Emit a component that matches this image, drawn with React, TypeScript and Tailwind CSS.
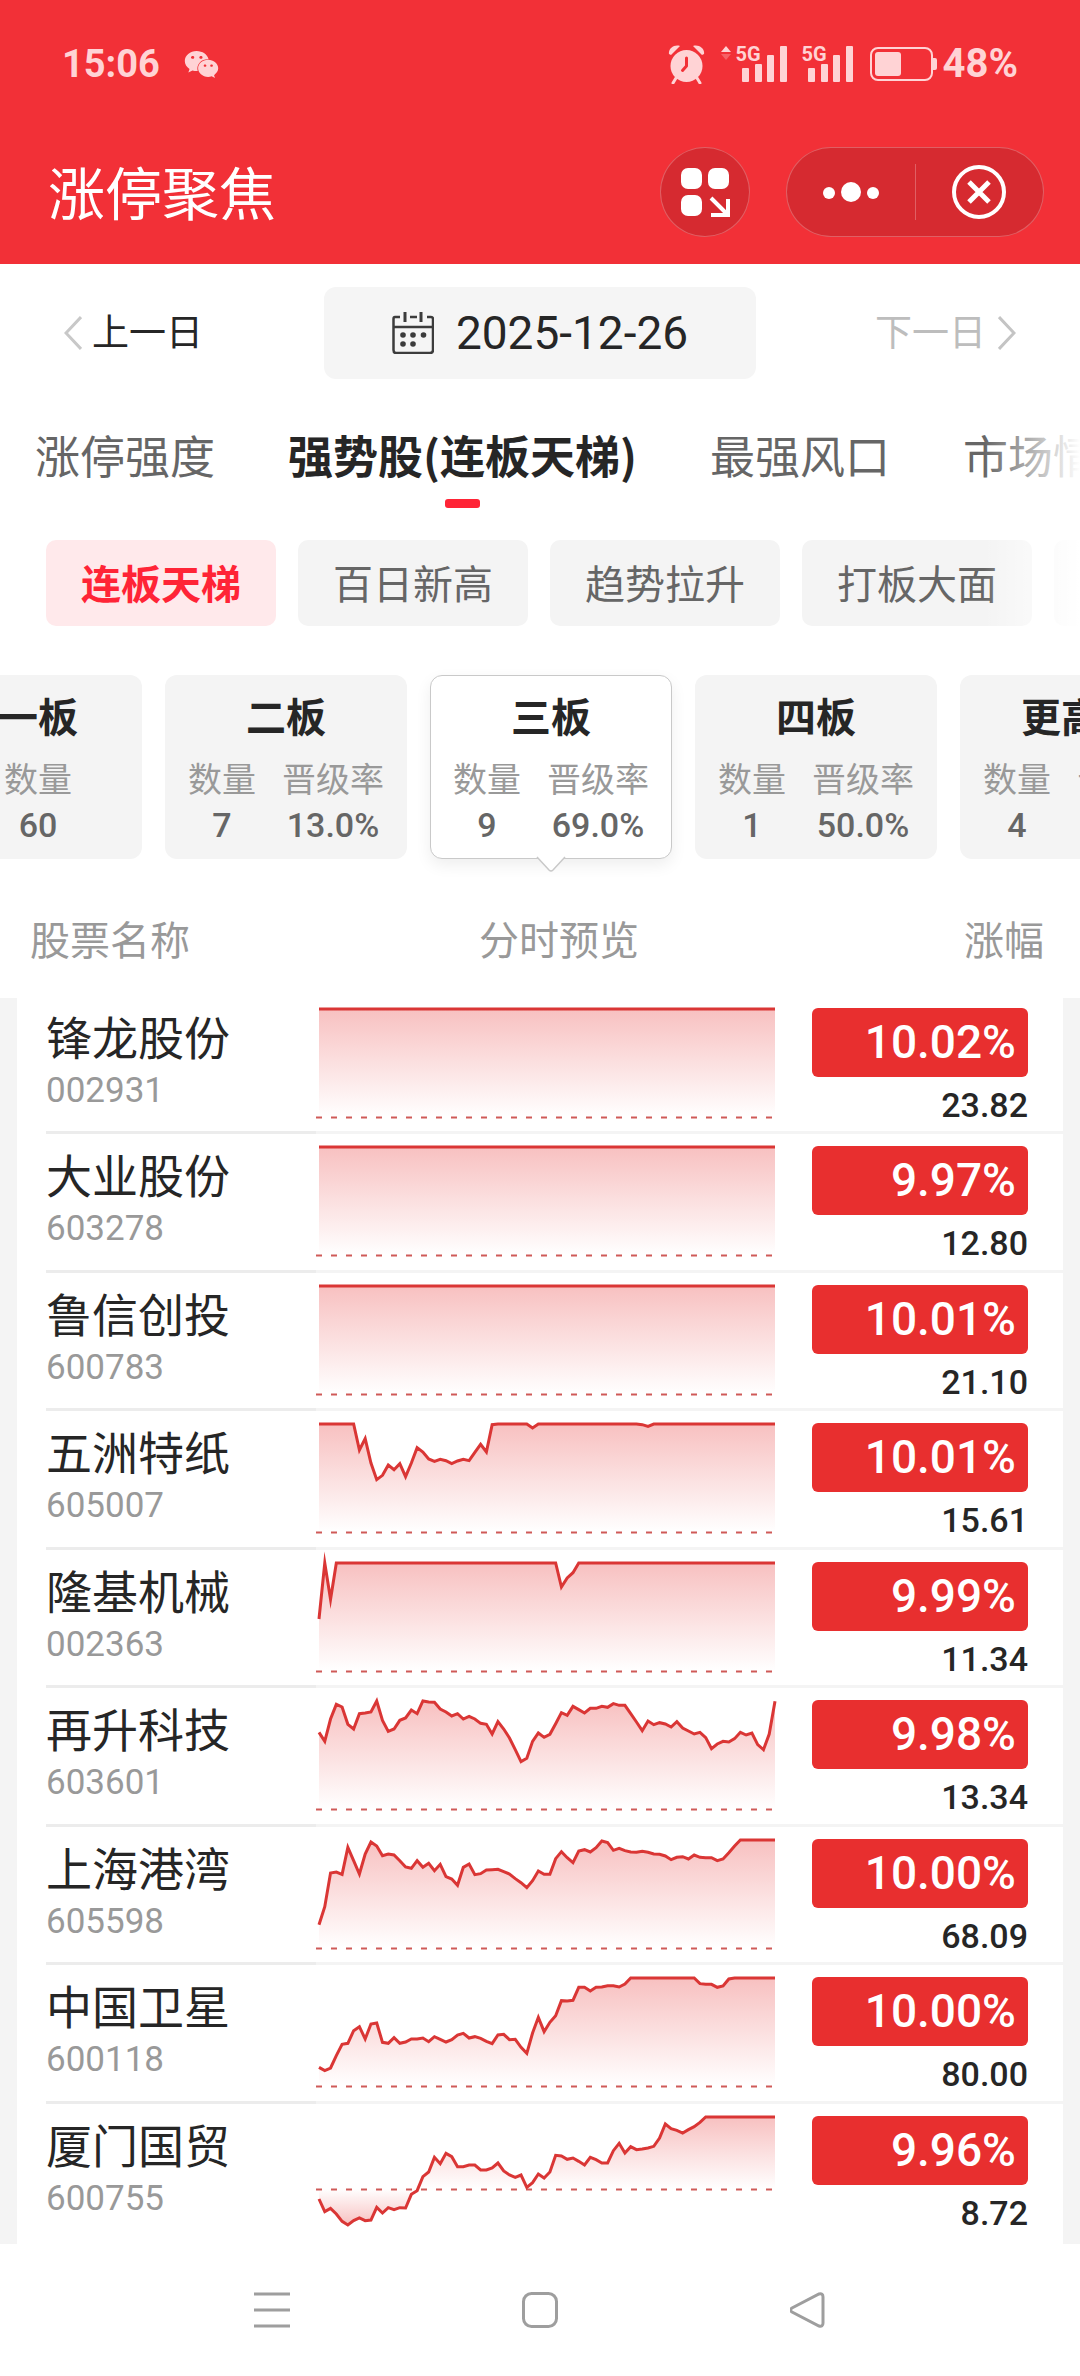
import React from "react";
import { FaWeixin } from "react-icons/fa";

type Stock = {
  name: string;
  code: string;
  change: string;
  price: string;
  base: number;
  depth: number[];
};

const POINTS = 80;
const LIMIT_BASE = 324;

const flat = (count: number): number[] => Array.from({ length: count }, () => 0);

// Each series is the distance below the limit-up price, sampled at equal intervals;
// `base` is the distance of the previous close on the same scale.
const stocks: Stock[] = [
  { name: "锋龙股份", code: "002931", change: "10.02%", price: "23.82", base: LIMIT_BASE, depth: flat(POINTS) },
  { name: "大业股份", code: "603278", change: "9.97%", price: "12.80", base: LIMIT_BASE, depth: flat(POINTS) },
  { name: "鲁信创投", code: "600783", change: "10.01%", price: "21.10", base: LIMIT_BASE, depth: flat(POINTS) },
  {
    name: "五洲特纸",
    code: "605007",
    change: "10.01%",
    price: "15.61",
    base: LIMIT_BASE,
    depth: [
      ...flat(7), 78, 44, 117, 167, 154, 123, 137, 119, 158, 117, 71, 84, 105, 112, 106, 110, 119, 111, 106, 110,
      85, 61, 84, 2, ...flat(6), 12, ...flat(18), 2, 7, ...flat(22),
    ],
  },
  {
    name: "隆基机械",
    code: "002363",
    change: "9.99%",
    price: "11.34",
    base: LIMIT_BASE,
    depth: [168, 0, 109, ...flat(39), 72, 45, 29, ...flat(35)],
  },
  {
    name: "再升科技",
    code: "603601",
    change: "9.98%",
    price: "13.34",
    base: LIMIT_BASE,
    depth: [
      94, 121, 54, 10, 18, 70, 84, 38, 36, 33, 0, 58, 91, 84, 58, 51, 27, 38, 0, 3, 4, 24, 33, 45, 38, 54, 46, 54,
      67, 70, 99, 62, 84, 111, 146, 182, 172, 121, 96, 109, 100, 68, 35, 43, 16, 26, 36, 22, 22, 16, 19, 8, 13, 13,
      38, 63, 89, 60, 71, 65, 69, 78, 62, 81, 90, 99, 94, 110, 143, 129, 121, 123, 113, 94, 102, 96, 131, 146, 99, 1,
    ],
  },
  {
    name: "上海港湾",
    code: "605598",
    change: "10.00%",
    price: "68.09",
    base: LIMIT_BASE,
    depth: [
      254, 200, 99, 96, 103, 22, 62, 102, 42, 6, 18, 47, 42, 45, 62, 81, 85, 62, 82, 70, 92, 73, 110, 117, 136, 82,
      72, 104, 101, 90, 89, 88, 95, 102, 116, 128, 143, 122, 93, 103, 103, 56, 35, 53, 68, 33, 29, 36, 23, 3, 8, 31,
      25, 32, 36, 37, 34, 37, 42, 43, 48, 59, 52, 50, 57, 45, 52, 53, 53, 62, 57, 38, 18, ...flat(7),
    ],
  },
  {
    name: "中国卫星",
    code: "600118",
    change: "10.00%",
    price: "80.00",
    base: LIMIT_BASE,
    depth: [
      268, 278, 270, 233, 199, 196, 158, 146, 183, 138, 135, 193, 196, 179, 196, 192, 183, 183, 180, 191, 176, 184,
      192, 185, 171, 166, 180, 176, 181, 190, 197, 171, 169, 185, 184, 208, 226, 165, 118, 161, 133, 113, 68, 69, 67,
      28, 28, 39, 28, 27, 23, 23, 27, 18, ...flat(12), 17, 19, 19, 28, 24, 3, ...flat(8),
    ],
  },
  {
    name: "厦门国贸",
    code: "600755",
    change: "9.96%",
    price: "8.72",
    base: 216,
    depth: [
      246, 284, 274, 291, 313, 324, 311, 303, 311, 309, 271, 288, 272, 278, 272, 273, 232, 221, 179, 165, 121, 140,
      109, 119, 149, 149, 144, 144, 159, 159, 153, 138, 162, 174, 181, 174, 211, 197, 171, 183, 165, 115, 117, 127,
      123, 133, 144, 121, 128, 138, 138, 101, 79, 108, 89, 98, 96, 93, 88, 63, 21, 35, 40, 48, 38, 29, 16, ...flat(13),
    ],
  },
];

const tabs = ["涨停强度", "强势股(连板天梯)", "最强风口", "市场情绪"];
const chips = ["连板天梯", "百日新高", "趋势拉升", "打板大面"];
const boards = [
  { title: "一板", count: "60" },
  { title: "二板", count: "7", rate: "13.0%" },
  { title: "三板", count: "9", rate: "69.0%", active: true },
  { title: "四板", count: "1", rate: "50.0%" },
  { title: "更高板", count: "4", rate: "36.0%" },
];

function Sparkline({ stock }: { stock: Stock }) {
  const top = 11;
  const left = 3;
  const width = 456;
  const y = (d: number) => top + d / 3;
  const base = y(stock.base);
  const line = stock.depth
    .map((d, i) => `${(left + (i * width) / (stock.depth.length - 1)).toFixed(2)},${y(d).toFixed(2)}`)
    .join(" L");
  const id = `fill-${stock.code}`;
  return (
    <svg viewBox="0 0 460 132" className="block w-[460px] h-[132px] overflow-visible" role="img" aria-label={`${stock.name}分时图`}>
      <defs>
        <linearGradient id={id} gradientUnits="userSpaceOnUse" x1="0" x2="0" y1={top} y2={y(LIMIT_BASE)}>
          <stop offset="0" stopColor="#e62e2e" stopOpacity="0.3" />
          <stop offset={stock.base / LIMIT_BASE} stopColor="#e62e2e" stopOpacity="0" />
          {stock.base < LIMIT_BASE && <stop offset="1" stopColor="#e62e2e" stopOpacity="0.3" />}
        </linearGradient>
      </defs>
      <path d={`M0,${Math.round(base) + 0.5} H${left + width}`} stroke="#cf5a58" strokeWidth="2" strokeDasharray="6 9" />
      <path d={`M${left},${base} L${line} V${base} Z`} fill={`url(#${id})`} />
      <path d={`M${line}`} fill="none" stroke="#da3635" strokeWidth="3" strokeMiterlimit="10" />
    </svg>
  );
}

function Signal() {
  return (
    <span className="relative block h-9 w-[51px]">
      <span className="absolute left-0 top-0 text-[20px] leading-4 font-bold">5G</span>
      <svg viewBox="0 0 51 36" className="h-9 w-[51px]" fill="currentColor">
        <rect x="6" y="22" width="7" height="14" rx="1" />
        <rect x="19" y="18" width="7" height="18" rx="1" />
        <rect x="31" y="9" width="7" height="27" rx="1" />
        <rect x="44" y="0" width="7" height="36" rx="1" />
      </svg>
    </span>
  );
}

function StatusBar() {
  return (
    <div className="flex h-32 items-center px-[62px] font-[Roboto,sans-serif] text-[#ffd3d5]">
      <span className="text-[38px] leading-none font-bold">15:06</span>
      <FaWeixin className="ml-6 size-[35px]" />
      <div className="ml-auto flex items-center">
        <svg viewBox="0 0 37 39" className="h-[39px] w-[37px]" fill="currentColor">
          <path d="M1 9 C0 4 6 -1 12 1 L3 10 Z" />
          <path d="M36 9 C37 4 31 -1 25 1 L34 10 Z" />
          <path d="M8 33 L5 38 M29 33 L32 38" stroke="currentColor" strokeWidth="3" strokeLinecap="round" />
          <circle cx="18.500" cy="21" r="16" />
          <path d="M18.500 13 V21 L14.500 25.500" fill="none" stroke="#f23037" strokeWidth="3" strokeLinecap="round" strokeLinejoin="round" />
        </svg>
        <svg viewBox="0 0 10 36" className="ml-4 h-9 w-[10px]" fill="currentColor">
          <path d="M5 0 L10 6 H0 Z" />
          <path d="M5 14 L10 8 H0 Z" opacity="0.3" />
        </svg>
        <span className="ml-[5px]"><Signal /></span>
        <span className="ml-[15px]"><Signal /></span>
        <svg viewBox="0 0 67 36" className="ml-[17px] h-9 w-[67px]">
          <rect x="1" y="2" width="61" height="32" rx="7" fill="none" stroke="currentColor" strokeWidth="2" />
          <rect x="5" y="6" width="26" height="24" rx="3" fill="currentColor" />
          <path d="M63 12 H65 Q67 12 67 14 V22 Q67 24 65 24 H63 Z" fill="currentColor" />
        </svg>
        <span className="ml-[6px] text-[40px] leading-none font-bold">48%</span>
      </div>
    </div>
  );
}

function TitleBar() {
  return (
    <div className="flex h-32 items-center pl-12 pr-9">
      <h1 className="pb-1 text-[57px] leading-[84px] text-white">涨停聚焦</h1>
      <button
        type="button"
        aria-label="添加到桌面"
        className="ml-auto flex size-[90px] items-center justify-center rounded-full border border-white/25 bg-[#d62a30] text-white"
      >
        <svg viewBox="0 0 50 50" className="size-[50px]" fill="currentColor">
          <rect x="1" y="1" width="21" height="21" rx="7" />
          <rect x="28" y="1" width="21" height="21" rx="7" />
          <rect x="1" y="28" width="21" height="21" rx="7" />
          <path d="M31 31 L46 46 M31 48 H48 V32" fill="none" stroke="currentColor" strokeWidth="4" />
        </svg>
      </button>
      <div className="ml-9 flex h-[90px] w-[258px] items-center rounded-full border border-white/25 bg-[#d62a30] text-white">
        <button type="button" aria-label="更多" className="flex h-full flex-1 items-center justify-center">
          <svg viewBox="0 0 56 20" className="h-5 w-14" fill="currentColor">
            <circle cx="6" cy="11" r="6" />
            <circle cx="28" cy="10" r="10" />
            <circle cx="50" cy="11" r="6" />
          </svg>
        </button>
        <span className="h-14 w-px bg-white/25" />
        <button type="button" aria-label="关闭" className="flex h-full flex-1 items-center justify-center">
          <svg viewBox="0 0 54 54" className="size-[54px]" fill="none" stroke="currentColor" strokeWidth="4">
            <circle cx="27" cy="27" r="25" />
            <path d="M17 17 L37 37 M37 17 L17 37" strokeWidth="5" />
          </svg>
        </button>
      </div>
    </div>
  );
}

function DateBar() {
  return (
    <div className="grid grid-cols-[1fr_auto_1fr] items-center px-16 py-[23px] text-[37px]">
      <button type="button" className="flex items-center gap-[10px] justify-self-start text-[#262626]">
        <svg viewBox="0 0 18 34" className="h-[34px] w-[18px]" fill="none" stroke="#c8c8c8" strokeWidth="3">
          <path d="M17 1 L2 17 L17 33" />
        </svg>
        <span className="pb-1">上一日</span>
      </button>
      <button
        type="button"
        className="flex h-[92px] w-[432px] items-center justify-center gap-[22px] rounded-xl bg-[#f5f5f5] font-[Roboto,sans-serif] text-[46px] leading-none text-[#262626]"
      >
        <svg viewBox="0 0 42 42" className="size-[42px]" fill="none" stroke="#3c3c3c" strokeWidth="2.500">
          <path d="M8 5 H3 Q1.500 5 1.500 7 V38 Q1.500 41 4 41 H38 Q41 41 41 38 V7 Q41 5 39 5 H35 M18 5 H25" />
          <path d="M13 0 V10 M29 0 V10" strokeWidth="3" />
          <path d="M2 15 H41" />
          <g fill="#3c3c3c" stroke="none">
            <circle cx="11" cy="23" r="2.800" />
            <circle cx="21" cy="23" r="2.800" />
            <circle cx="31.500" cy="23" r="2.800" />
            <circle cx="11" cy="32" r="2.800" />
            <circle cx="21" cy="32" r="2.800" />
          </g>
        </svg>
        2025-12-26
      </button>
      <button type="button" disabled className="flex items-center gap-[12px] justify-self-end text-[#bdbdbd]">
        <span className="pb-1">下一日</span>
        <svg viewBox="0 0 18 34" className="h-[34px] w-[18px]" fill="none" stroke="#c4c4c4" strokeWidth="3">
          <path d="M1 1 L16 17 L1 33" />
        </svg>
      </button>
    </div>
  );
}

function TabsAndChips() {
  return (
    <div className="relative overflow-hidden">
      <nav className="flex gap-[73px] pl-[35px] pt-5 pb-8">
        {tabs.map((tab, i) => (
          <button
            key={tab}
            type="button"
            className={
              i === 1
                ? "flex shrink-0 flex-col items-center gap-[11px] text-[45px] leading-[66px] font-bold text-[#262626]"
                : "flex shrink-0 flex-col items-center gap-[11px] text-[45px] leading-[66px] text-[#666]"
            }
          >
            {tab}
            <span className={i === 1 ? "h-[9px] w-[35px] rounded-[3px] bg-[#ff2436]" : "h-[9px] w-[35px]"} />
          </button>
        ))}
      </nav>
      <div className="flex gap-[22px] pl-[46px]">
        {chips.map((chip, i) => (
          <button
            key={chip}
            type="button"
            className={
              i === 0
                ? "h-[86px] shrink-0 rounded-[10px] bg-[#ffe9eb] px-[35px] pb-[3px] text-[40px] leading-none font-bold text-[#ff2436]"
                : "h-[86px] shrink-0 rounded-[10px] bg-[#f4f4f4] px-[35px] pb-[3px] text-[40px] leading-none text-[#666]"
            }
          >
            {chip}
          </button>
        ))}
        <button type="button" aria-label="更多榜单" className="h-[86px] w-[230px] shrink-0 rounded-[10px] bg-[#f4f4f4]" />
      </div>
      <div className="pointer-events-none absolute inset-y-0 right-0 w-24 bg-linear-to-r from-white/0 to-white" />
    </div>
  );
}

function BoardCards() {
  return (
    <div className="overflow-hidden pt-[49px] pb-[21px]">
      <div className="-ml-[66px] flex gap-[23px]">
        {boards.map((b) => (
          <button
            key={b.title}
            type="button"
            className={
              b.active
                ? "relative flex h-[184px] w-[242px] shrink-0 flex-col items-center rounded-xl border border-[#c9c9c9] bg-white pt-[15px] shadow-[0_6px_16px_rgba(0,0,0,0.07)]"
                : b.rate
                  ? "flex h-[184px] w-[242px] shrink-0 flex-col items-center rounded-xl bg-[#f4f4f4] pt-4"
                  : "flex h-[184px] w-[208px] shrink-0 flex-col items-center rounded-xl bg-[#f4f4f4] pt-4"
            }
          >
            <span className="text-[40px] leading-[48px] font-bold text-[#262626]">{b.title}</span>
            <span className="mt-[17px] flex justify-center gap-[26px] text-[34px] leading-[44px] text-[#999]">
              <span className="flex flex-col gap-[3px]">
                数量
                <span className="font-[Roboto,sans-serif] font-medium text-[#666]">{b.count}</span>
              </span>
              {b.rate && (
                <span className="flex flex-col gap-[3px]">
                  晋级率
                  <span className="font-[Roboto,sans-serif] font-medium text-[#666]">{b.rate}</span>
                </span>
              )}
            </span>
            {b.active && (
              <svg viewBox="0 0 30 17" className="absolute -bottom-[15px] left-[105px] h-[17px] w-[30px]">
                <path d="M0 0 L13 14 Q15 16 17 14 L30 0 Z" fill="#fff" />
                <path d="M1 1 L13 14 Q15 16 17 14 L29 1" fill="none" stroke="#c9c9c9" strokeWidth="1.500" />
              </svg>
            )}
          </button>
        ))}
      </div>
    </div>
  );
}

function StockTable() {
  return (
    <table className="flex flex-1 flex-col">
      <thead className="block">
        <tr className="flex h-[118px] items-center pl-[30px] pr-9 pb-[2px] text-[40px] text-[#999]">
          <th scope="col" className="w-[449px] text-left font-normal">股票名称</th>
          <th scope="col" className="flex-1 text-left font-normal">分时预览</th>
          <th scope="col" className="text-right font-normal">涨幅</th>
        </tr>
      </thead>
      <tbody className="flex flex-1 flex-col border-x-[17px] border-[#f4f4f4] pl-[29px]">
        {stocks.map((s) => (
          <tr key={s.code} className="group flex flex-1 pb-[2px]">
            <td className="w-[270px] border-b-[3px] border-[#ececec] pt-[6px] group-last:border-transparent">
              <div className="text-[46px] leading-[62px] text-[#262626]">{s.name}</div>
              <div className="mt-[3px] font-[Roboto,sans-serif] text-[35px] leading-[44px] text-[#999]">{s.code}</div>
            </td>
            <td className="flex-1 border-b-[3px] border-[#f4f4f4] group-last:border-transparent">
              <Sparkline stock={s} />
            </td>
            <td className="flex flex-col items-end border-b-[3px] border-[#f4f4f4] pt-[10px] pr-[35px] font-[Roboto,sans-serif] group-last:border-transparent">
              <div className="h-[69px] w-[216px] rounded-md bg-[#e82f2f] pr-3 text-right text-[46px] leading-[69px] font-medium text-white">
                {s.change}
              </div>
              <div className="mt-[6px] text-[34px] leading-[44px] font-medium text-[#262626]">{s.price}</div>
            </td>
          </tr>
        ))}
      </tbody>
    </table>
  );
}

function SystemNav() {
  return (
    <div className="flex h-[132px] items-center justify-center gap-[232px] text-[#9e9e9e]">
      <button type="button" aria-label="最近任务">
        <svg viewBox="0 0 36 36" className="size-9" stroke="currentColor" strokeWidth="3">
          <path d="M0 2 H36 M0 18 H36 M0 34 H36" />
        </svg>
      </button>
      <button type="button" aria-label="主屏幕">
        <svg viewBox="0 0 36 36" className="size-9" fill="none" stroke="currentColor" strokeWidth="3">
          <rect x="1.500" y="1.500" width="33" height="33" rx="8" />
        </svg>
      </button>
      <button type="button" aria-label="返回">
        <svg viewBox="0 0 36 36" className="size-9" fill="none" stroke="currentColor" strokeWidth="3">
          <path d="M29 2 Q33 1 33 5 V31 Q33 35 29 34 L2 20 Q-1 18 2 16 Z" />
        </svg>
      </button>
    </div>
  );
}

export default function App() {
  return (
    <div className="flex min-h-screen flex-col overflow-x-hidden bg-white font-['Noto_Sans_CJK_SC',sans-serif]">
      <header className="bg-[#f23037] pb-2">
        <StatusBar />
        <TitleBar />
      </header>
      <main className="flex flex-1 flex-col">
        <DateBar />
        <TabsAndChips />
        <BoardCards />
        <StockTable />
      </main>
      <SystemNav />
    </div>
  );
}
